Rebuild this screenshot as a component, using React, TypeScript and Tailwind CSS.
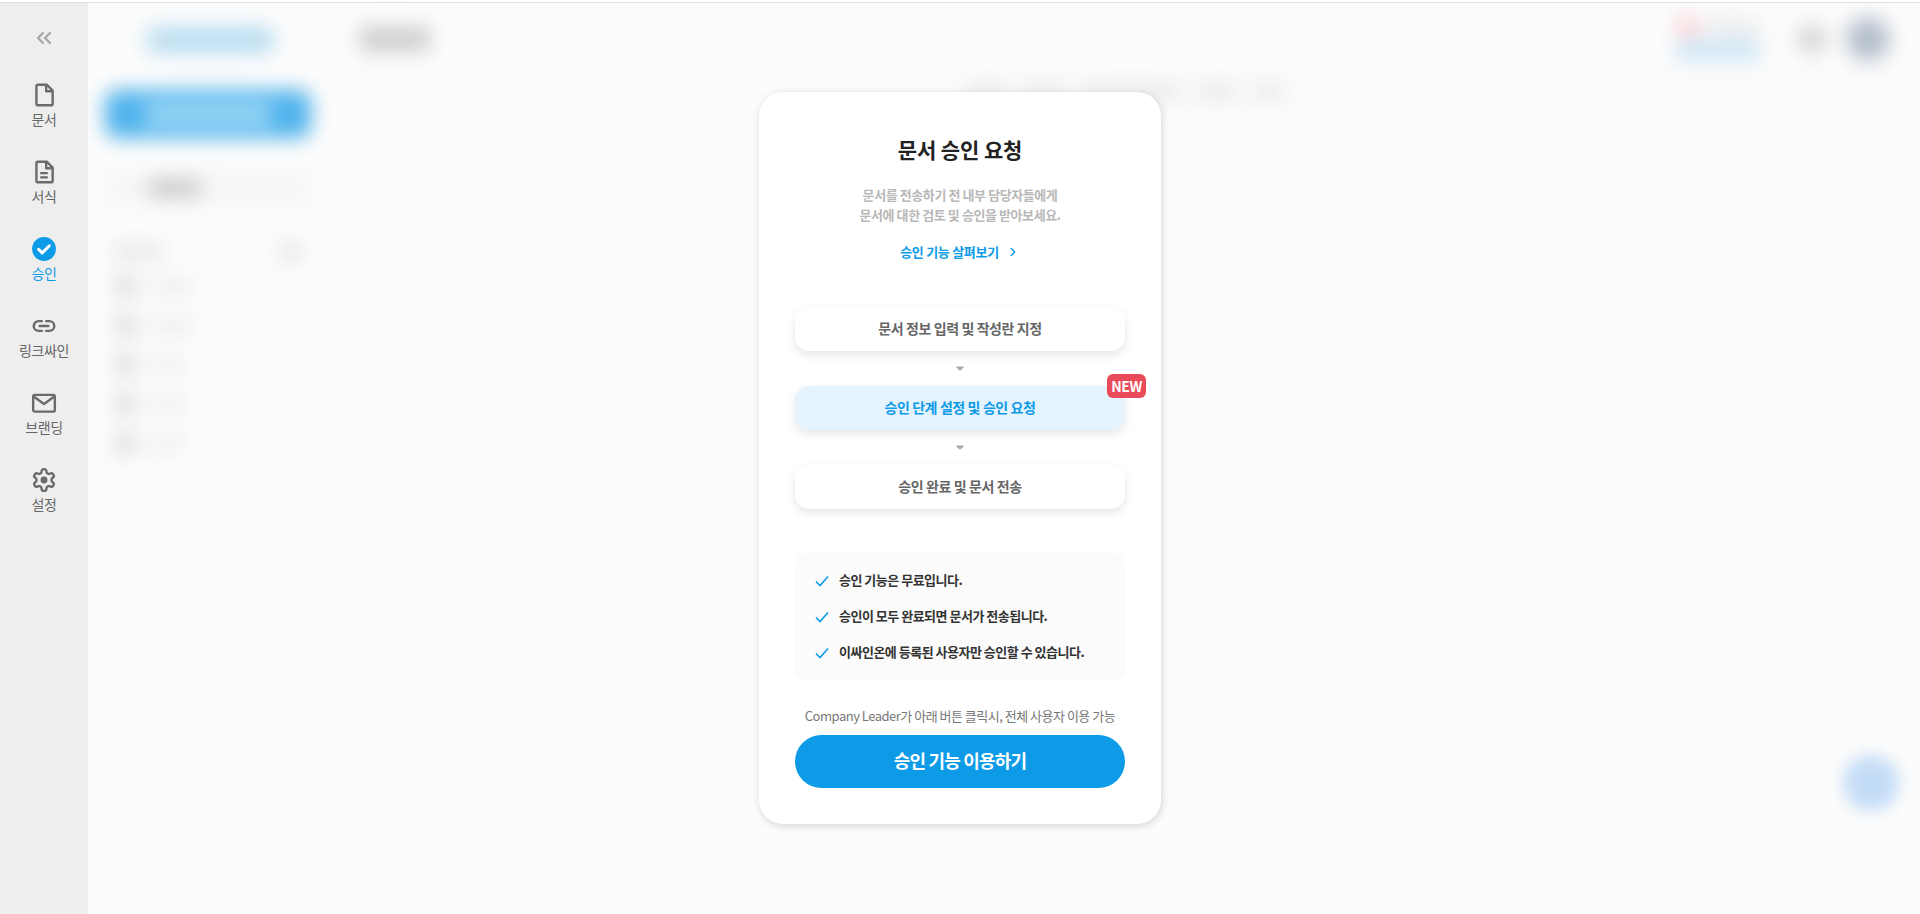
import { ChevronRight, ChevronsLeft } from 'lucide-react'
import type { ReactNode } from 'react'

const FONT = "font-['Noto_Sans_CJK_KR','Noto_Sans',sans-serif]"

function DocIcon() {
  return (
    <svg viewBox="0 0 24 24" className="h-[26px] w-[26px]" fill="none" stroke="#6b6b6b" strokeWidth="2.2" strokeLinejoin="round">
      <path d="M6.5 2.5h8l5.5 5.5v12a1.5 1.5 0 0 1-1.5 1.500h-12A1.5 1.5 0 0 1 5 20V4a1.5 1.5 0 0 1 1.5-1.5Z" />
      <path d="M14 2.5v6h6" />
    </svg>
  )
}

function FormIcon() {
  return (
    <svg viewBox="0 0 24 24" className="h-[26px] w-[26px]" fill="none" stroke="#6b6b6b" strokeWidth="2.2" strokeLinejoin="round">
      <path d="M6.5 2.5h8l5.5 5.5v12a1.5 1.5 0 0 1-1.5 1.5h-12A1.5 1.5 0 0 1 5 20V4a1.5 1.5 0 0 1 1.5-1.5Z" />
      <path d="M14 2.5v6h6M8.5 13h7M8.5 17h7" />
    </svg>
  )
}

function ApproveIcon() {
  return (
    <svg viewBox="0 0 24 24" className="h-[26px] w-[26px]">
      <circle cx="12" cy="12" r="11" fill="#0d9be8" />
      <path d="M7 12.3l3.3 3.2L17 9" fill="none" stroke="#fff" strokeWidth="2.8" strokeLinecap="round" strokeLinejoin="round" />
    </svg>
  )
}

function LinkIcon() {
  return (
    <svg viewBox="0 0 24 24" className="h-[26px] w-[26px]" fill="none" stroke="#6b6b6b" strokeWidth="2.2" strokeLinecap="round">
      <path d="M10 7.5H7a4.5 4.5 0 0 0 0 9h3M14 7.5h3a4.5 4.5 0 0 1 0 9h-3M8 12h8" />
    </svg>
  )
}

function MailIcon() {
  return (
    <svg viewBox="0 0 24 24" className="h-[26px] w-[26px]" fill="none" stroke="#6b6b6b" strokeWidth="2.2" strokeLinejoin="round">
      <rect x="2" y="4.5" width="20" height="15.5" rx="1.5" />
      <path d="M2.5 6l9.5 7 9.5-7" />
    </svg>
  )
}

function GearIcon() {
  return (
    <svg viewBox="0 0 24 24" className="h-[26px] w-[26px]" fill="none" stroke="#6b6b6b" strokeWidth="2.2" strokeLinejoin="round">
      <path d="M12.22 2h-.44a2 2 0 0 0-2 2v.18a2 2 0 0 1-1 1.73l-.43.25a2 2 0 0 1-2 0l-.15-.08a2 2 0 0 0-2.73.73l-.22.38a2 2 0 0 0 .73 2.73l.15.1a2 2 0 0 1 1 1.72v.51a2 2 0 0 1-1 1.74l-.15.09a2 2 0 0 0-.73 2.73l.22.38a2 2 0 0 0 2.73.73l.15-.08a2 2 0 0 1 2 0l.43.25a2 2 0 0 1 1 1.73V20a2 2 0 0 0 2 2h.44a2 2 0 0 0 2-2v-.18a2 2 0 0 1 1-1.73l.43-.25a2 2 0 0 1 2 0l.15.08a2 2 0 0 0 2.73-.73l.22-.39a2 2 0 0 0-.73-2.73l-.15-.08a2 2 0 0 1-1-1.74v-.5a2 2 0 0 1 1-1.74l.15-.09a2 2 0 0 0 .73-2.73l-.22-.38a2 2 0 0 0-2.73-.73l-.15.08a2 2 0 0 1-2 0l-.43-.25a2 2 0 0 1-1-1.73V4a2 2 0 0 0-2-2z" />
      <circle cx="12" cy="12" r="3.2" fill="#6b6b6b" stroke="none" />
    </svg>
  )
}

const NAV_ITEMS: { label: string; icon: ReactNode; active?: boolean }[] = [
  { label: '문서', icon: <DocIcon /> },
  { label: '서식', icon: <FormIcon /> },
  { label: '승인', icon: <ApproveIcon />, active: true },
  { label: '링크싸인', icon: <LinkIcon /> },
  { label: '브랜딩', icon: <MailIcon /> },
  { label: '설정', icon: <GearIcon /> },
]

const NOTES = [
  '승인 기능은 무료입니다.',
  '승인이 모두 완료되면 문서가 전송됩니다.',
  '이싸인온에 등록된 사용자만 승인할 수 있습니다.',
]

function Sidebar() {
  return (
    <aside className="flex w-[88px] shrink-0 flex-col items-center bg-[#eeeeee] pt-[23px]">
      <ChevronsLeft className="h-[24px] w-[24px]" color="#a5a5a5" strokeWidth={2.2} />
      <nav className="mt-[32px] flex flex-col items-center gap-[31px]">
        {NAV_ITEMS.map(item => (
          <div key={item.label} className="flex h-[46px] flex-col items-center">
            {item.icon}
            <span className={`mt-[3px] text-[14px] leading-[17px] tracking-[-0.4px] ${item.active ? 'text-[#0d9be8]' : 'text-[#666666]'}`}>
              {item.label}
            </span>
          </div>
        ))}
      </nav>
    </aside>
  )
}

// the page behind the dialog, only visible as soft blurred shapes
function BlurredPage() {
  return (
    <div className="flex h-full flex-1 blur-[10px]">
      <div className="flex w-[240px] shrink-0 flex-col px-[17px] pt-[24px]">
        <div className="ml-[40px] h-[26px] w-[130px] rounded-full bg-[#b8dcf0]" />
        <div className="mt-[37px] flex h-[48px] w-[206px] items-center justify-center rounded-[12px] bg-[#4fb2ec]">
          <div className="h-[20px] w-[126px] bg-[#a5dcf6]" />
        </div>
        <div className="mt-[34px] flex h-[32px] w-[206px] items-center rounded-md bg-[#f6f6f6] pl-[44px]">
          <div className="h-[18px] w-[52px] bg-[#c8c8c8]" />
        </div>
        <div className="mt-[36px] flex items-center justify-between pl-[8px] pr-[8px]">
          <div className="h-[14px] w-[50px] bg-[#e4e4e4]" />
          <div className="h-[24px] w-[24px] rounded-full bg-[#e8e8e8]" />
        </div>
        <div className="mt-[13px] flex flex-col gap-[19px] pl-[10px]">
          {[38, 38, 28, 28, 28].map((width, index) => (
            <div key={index} className="flex h-[20px] items-center gap-[16px]">
              <div className="h-[22px] w-[22px] rounded bg-[#dedede]" />
              <div className="h-[12px] bg-[#e8e8e8]" style={{ width }} />
            </div>
          ))}
        </div>
      </div>
      <div className="flex min-w-0 flex-1 flex-col">
        <div className="flex h-[72px] items-center border-b border-[#ededed] pl-[32px] pr-[30px]">
          <div className="h-[24px] w-[70px] bg-[#cccccc]" />
          <div className="ml-auto flex flex-col gap-[4px]">
            <div className="flex items-center gap-[6px]">
              <div className="h-[18px] w-[22px] bg-[#fbcfd3]" />
              <div className="h-[12px] w-[56px] bg-[#e6e6e6]" />
            </div>
            <div className="h-[20px] w-[84px] bg-[#cde5f5]" />
          </div>
          <div className="ml-[38px] h-[28px] w-[28px] rounded-full bg-[#d2d2d2]" />
          <div className="ml-[20px] h-[44px] w-[44px] rounded-full bg-[#b4bfcc]" />
        </div>
        <div className="flex justify-center gap-[16px] pl-[2px] pt-[10px]">
          {[40, 44, 100, 40, 30].map((width, index) => (
            <div key={index} className="h-[14px] bg-[#e6e6e6]" style={{ width }} />
          ))}
        </div>
      </div>
    </div>
  )
}

function Arrow() {
  return (
    <svg viewBox="0 0 8 5" className="h-[5px] w-[8px]">
      <path d="M0.8 0.4h6.4a.6.6 0 0 1 .45 1L4.4 4.6a.6.6 0 0 1-.8 0L.35 1.4a.6.6 0 0 1 .45-1Z" fill="#aaaaaa" />
    </svg>
  )
}

function Step({ label, active, children }: { label: string; active?: boolean; children?: ReactNode }) {
  return (
    <div
      className={`relative flex h-[44px] items-center justify-center rounded-[14px] pb-[2px] text-[14px] font-bold tracking-[-0.4px] shadow-[0_4px_10px_rgba(0,0,0,0.1)] ${
        active ? 'bg-[#e4f3fd] text-[#0d9be8]' : 'bg-white text-[#666666]'
      }`}
    >
      {label}
      {children}
    </div>
  )
}

function ApprovalCard() {
  return (
    <div className="flex w-[402px] flex-col rounded-[24px] bg-white px-[36px] pb-[36px] pt-[41px] shadow-[1px_2px_8px_rgba(0,0,0,0.16)]">
      <h2 className="text-center text-[21px] font-bold leading-[32px] tracking-[-0.1px] text-[#222222]">문서 승인 요청</h2>
      <p className="mt-[20px] text-center text-[13px] font-bold leading-[20px] tracking-[-0.42px] text-[#b8b8b8]">
        문서를 전송하기 전 내부 담당자들에게
        <br />
        문서에 대한 검토 및 승인을 받아보세요.
      </p>
      <div className="mt-[17px] flex h-[20px] items-center justify-center gap-[7px] text-[13px] font-bold tracking-[-0.3px] text-[#0d9be8]">
        승인 기능 살펴보기
        <ChevronRight className="h-[14px] w-[14px]" strokeWidth={2.5} />
      </div>

      <div className="mt-[45px] flex flex-col">
        <Step label="문서 정보 입력 및 작성란 지정" />
        <div className="flex h-[35px] items-center justify-center">
          <Arrow />
        </div>
        <Step label="승인 단계 설정 및 승인 요청" active>
          <span className="absolute right-[-21px] top-[-12px] flex h-[24px] w-[39px] items-center justify-center rounded-[6px] bg-[#e94b5b] text-[14px] font-bold text-white">
            NEW
          </span>
        </Step>
        <div className="flex h-[35px] items-center justify-center">
          <Arrow />
        </div>
        <Step label="승인 완료 및 문서 전송" />
      </div>

      <ul className="mt-[44px] flex flex-col rounded-[12px] bg-[#fbfbfb] py-[10px] pl-[20px]">
        {NOTES.map(note => (
          <li key={note} className="flex h-[36px] items-center gap-[10px] text-[13px] font-bold tracking-[-0.5px] text-[#333333]">
            <svg viewBox="0 0 14 12" className="h-[12px] w-[14px]" fill="none" stroke="#0d9be8" strokeWidth="1.6">
              <path d="M1 6.5l4 4L13 1.5" />
            </svg>
            <span className="pb-[2px]">{note}</span>
          </li>
        ))}
      </ul>

      <p className="mb-[9px] mt-[25px] text-center text-[13px] leading-[20px] tracking-[-0.5px] text-[#777777]">
        Company Leader가 아래 버튼 클릭시, 전체 사용자 이용 가능
      </p>
      <button className="h-[53px] rounded-full bg-[#0d9be8] pb-[2px] text-[18px] font-bold tracking-[-0.8px] text-white">
        승인 기능 이용하기
      </button>
    </div>
  )
}

export default function App() {
  return (
    <div className={`relative flex h-screen flex-col overflow-hidden bg-white ${FONT}`}>
      <div className="h-[3px] shrink-0 border-b border-[#e0e0e0] bg-white" />
      <div className="flex min-h-0 flex-1">
        <Sidebar />
        <main className="relative flex min-w-0 flex-1 overflow-hidden bg-[#fcfcfc]">
          <BlurredPage />
          <div className="absolute bottom-[103px] right-[21px] h-[56px] w-[56px] rounded-full bg-[#c3dcf6] blur-[8px]" />
        </main>
      </div>
      <div className="absolute inset-0 flex items-start justify-center pt-[92px]">
        <ApprovalCard />
      </div>
    </div>
  )
}
